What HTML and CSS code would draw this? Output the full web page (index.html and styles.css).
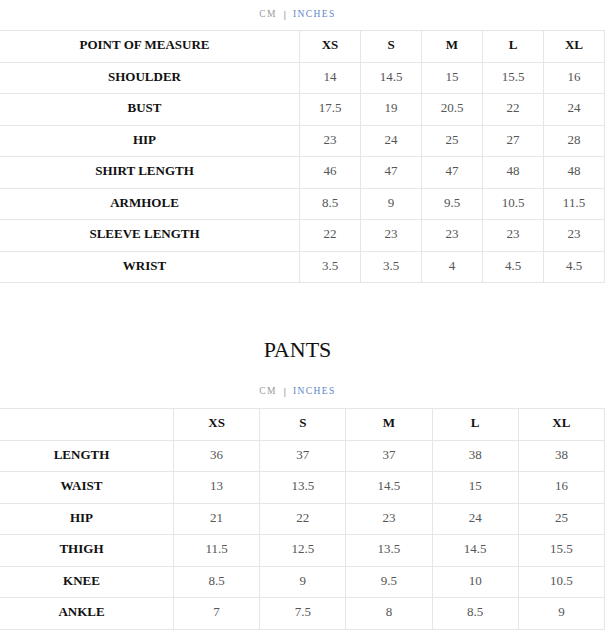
FILE: index.html
```html
<!DOCTYPE html>
<html>
<head>
<meta charset="utf-8">
<link rel="stylesheet" href="styles.css">
</head>
<body>
<main class="page">
<section class="chart">
  <div class="units"><span class="cm">CM</span><span class="sep">|</span><span class="in">INCHES</span></div>
  <table class="sizes top">
    <tr class="head"><th>POINT OF MEASURE</th><th>XS</th><th>S</th><th>M</th><th>L</th><th>XL</th></tr>
    <tr><th>SHOULDER</th><td>14</td><td>14.5</td><td>15</td><td>15.5</td><td>16</td></tr>
    <tr><th>BUST</th><td>17.5</td><td>19</td><td>20.5</td><td>22</td><td>24</td></tr>
    <tr><th>HIP</th><td>23</td><td>24</td><td>25</td><td>27</td><td>28</td></tr>
    <tr><th>SHIRT LENGTH</th><td>46</td><td>47</td><td>47</td><td>48</td><td>48</td></tr>
    <tr><th>ARMHOLE</th><td>8.5</td><td>9</td><td>9.5</td><td>10.5</td><td>11.5</td></tr>
    <tr><th>SLEEVE LENGTH</th><td>22</td><td>23</td><td>23</td><td>23</td><td>23</td></tr>
    <tr><th>WRIST</th><td>3.5</td><td>3.5</td><td>4</td><td>4.5</td><td>4.5</td></tr>
  </table>
</section>
<section class="chart pants">
  <h2 class="title">PANTS</h2>
  <div class="units"><span class="cm">CM</span><span class="sep">|</span><span class="in">INCHES</span></div>
  <table class="sizes bottom">
    <tr class="head"><th></th><th>XS</th><th>S</th><th>M</th><th>L</th><th>XL</th></tr>
    <tr><th>LENGTH</th><td>36</td><td>37</td><td>37</td><td>38</td><td>38</td></tr>
    <tr><th>WAIST</th><td>13</td><td>13.5</td><td>14.5</td><td>15</td><td>16</td></tr>
    <tr><th>HIP</th><td>21</td><td>22</td><td>23</td><td>24</td><td>25</td></tr>
    <tr><th>THIGH</th><td>11.5</td><td>12.5</td><td>13.5</td><td>14.5</td><td>15.5</td></tr>
    <tr><th>KNEE</th><td>8.5</td><td>9</td><td>9.5</td><td>10</td><td>10.5</td></tr>
    <tr><th>ANKLE</th><td>7</td><td>7.5</td><td>8</td><td>8.5</td><td>9</td></tr>
  </table>
</section>
</main>
</body>
</html>
```
FILE: styles.css
```css
html, body {
  margin: 0;
  padding: 0;
  background: #fff;
  overflow: hidden;
}
body {
  font-family: "Liberation Serif", "Times New Roman", serif;
  color: #111;
  width: 605px;
}
.page {
  width: 615px;
  margin-left: -10px;
}
.units {
  display: flex;
  justify-content: center;
  align-items: center;
  gap: 7px;
  height: 25px;
  padding-top: 1px;
  font-size: 9.5px;
  letter-spacing: 1.4px;
  margin-bottom: 4px;
}
.units .cm { color: #999; }
.units .sep { color: #666; font-size: 11px; letter-spacing: 0; }
.units .in { color: #5f86c8; }
.sizes {
  width: 615px;
  border-collapse: collapse;
  table-layout: fixed;
}
.sizes tr { height: 31.5px; }
.sizes th, .sizes td {
  border: 1px solid #e6e6e6;
  text-align: center;
  padding: 0 0 2px 0;
  font-size: 13px;
}
.sizes th:first-child, .sizes td:first-child { border-left: none; }
.sizes th {
  font-weight: bold;
  color: #111;
}
.sizes td {
  color: #555;
  font-weight: normal;
}
.top th:first-child { width: 309px; }
.bottom th:first-child { width: 183px; }
.pants {
  padding-top: 51px;
}
.title {
  margin: 0;
  font-weight: normal;
  font-size: 22px;
  text-align: center;
  color: #111;
  line-height: 32px;
  margin-bottom: 16px;
}
.pants .units { height: 18px; margin-bottom: 8px; padding-top: 0; }
```
